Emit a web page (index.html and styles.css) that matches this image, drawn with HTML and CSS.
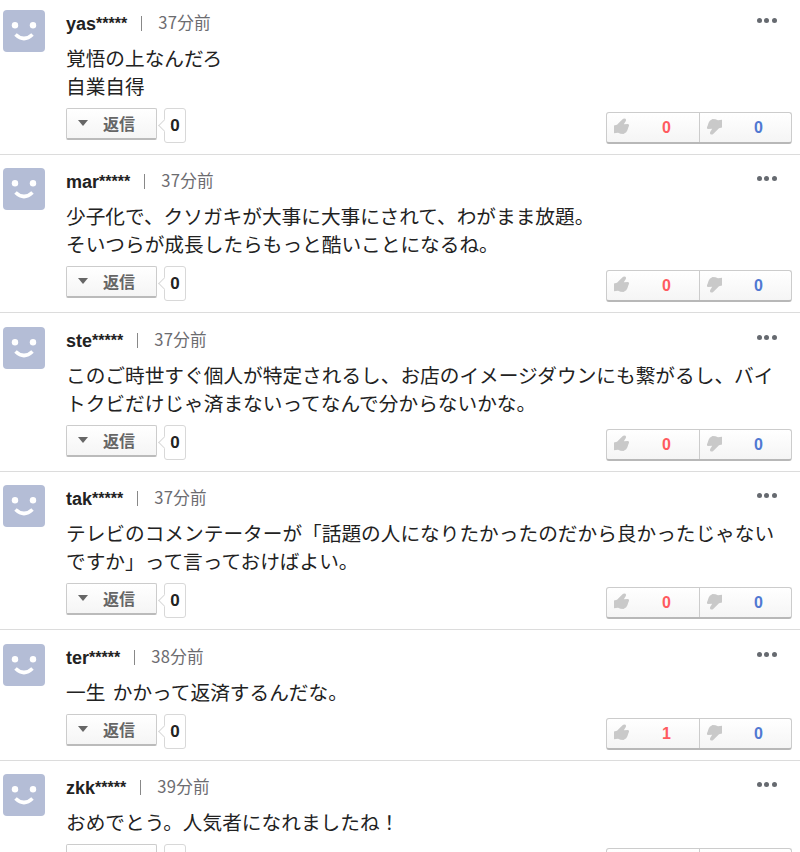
FILE: index.html
```html
<!DOCTYPE html>
<html lang="ja">
<head>
  <meta charset="UTF-8" />
  <meta name="viewport" content="width=device-width, initial-scale=1.0"/>
  <title>コメント</title>
  <link rel="stylesheet" href="styles.css">
</head>
<body>

  <!-- Shared icons -->
  <svg class="icons">
    <symbol id="face" viewBox="0 0 42 42">
      <circle cx="12" cy="15.2" r="3.2" fill="#fff"/>
      <circle cx="30" cy="15.2" r="3.2" fill="#fff"/>
      <path d="M12.5 24.5Q21 32.5 29.5 24.5" fill="none" stroke="#fff" stroke-width="3.6"/>
    </symbol>
    <symbol id="thumb" viewBox="0 0 16 17">
      <path d="M0 7.4L3 6.8L8.8 1Q10 .1 11.5.8Q12.5 1.6 11.8 2.9L9.8 6.3L14 5.9Q15.5 6.2 15 7.8L14.2 9.8L13.4 12.2L12.2 14.2L9.5 16L6.5 15.8L4 14.8L0 15.2Z" fill="#c9c9c9"/>
    </symbol>
  </svg>

  <ul id="comments"></ul>

  <script>
    const comments = [
      { name: 'yas', time: '37分前', lines: ['覚悟の上なんだろ', '自業自得'], good: 0 },
      { name: 'mar', time: '37分前', lines: ['少子化で、クソガキが大事に大事にされて、わがまま放題。', 'そいつらが成長したらもっと酷いことになるね。'], good: 0 },
      { name: 'ste', time: '37分前', lines: ['このご時世すぐ個人が特定されるし、お店のイメージダウンにも繋がるし、バイトクビだけじゃ済まないってなんで分からないかな。'], good: 0 },
      { name: 'tak', time: '37分前', lines: ['テレビのコメンテーターが「話題の人になりたかったのだから良かったじゃないですか」って言っておけばよい。'], good: 0 },
      { name: 'ter', time: '38分前', lines: ['一生 かかって返済するんだな。'], good: 1 },
      { name: 'zkk', time: '39分前', lines: ['おめでとう。人気者になれましたね！'], good: 0 }
    ];

    document.getElementById('comments').innerHTML = comments.map(c => `
      <li class="comment">
        <svg class="avatar"><use href="#face"/></svg>
        <div class="content">
          <div class="meta">
            <span class="name">${c.name}</span>
            <span class="stars">*****</span>
            <span class="divider"></span>
            <span class="time">${c.time}</span>
            <button class="more"><i></i><i></i><i></i></button>
          </div>
          <p class="text">${c.lines.join('<br>')}</p>
          <div class="actions">
            <button class="reply"><i class="arrow"></i>返信</button>
            <span class="count">0</span>
            <div class="votes">
              <button class="vote good"><svg><use href="#thumb"/></svg><b>${c.good}</b></button>
              <button class="vote bad"><svg><use href="#thumb"/></svg><b>0</b></button>
            </div>
          </div>
        </div>
      </li>`).join('');
  </script>

</body>
</html>
```
FILE: styles.css
```css
* {
  box-sizing: border-box;
  margin: 0;
  padding: 0;
}
body {
  font-family: "Liberation Sans", "Noto Sans CJK JP", sans-serif;
  background: #fff;
  color: #222;
  height: 852px;
  overflow: hidden;
}
.icons {
  display: none;
}
#comments {
  list-style: none;
}
.comment {
  display: flex;
  gap: 21px;
  padding: 13.4px 8px 11px 3px;
  border-bottom: 1px solid #dcdcdc;
}
.comment:first-child {
  padding-top: 10px;
}
.avatar {
  width: 42px;
  height: 42px;
  flex: none;
  background: #b4bdd6;
  border-radius: 4px;
}
.content {
  flex: 1;
}
.meta {
  display: flex;
  height: 35px;
  line-height: 25px;
}
.name {
  font-size: 18px;
  font-weight: bold;
  line-height: 29px;
}
.stars {
  font-size: 16px;
  font-weight: bold;
  line-height: 28px;
}
.divider {
  width: 1px;
  height: 15px;
  margin: 6px 16px 0 14px;
  background: #888;
}
.time {
  font-family: "Noto Sans CJK JP", sans-serif;
  font-size: 16.6px;
  line-height: 24px;
  letter-spacing: 0.3px;
  color: #6c6c70;
}
.more {
  display: flex;
  gap: 2.6px;
  height: 5px;
  margin: 8px 15px 0 auto;
  border: none;
  background: none;
}
.more i {
  width: 5px;
  height: 5px;
  border-radius: 50%;
  background: #666a70;
}
.text {
  font-family: "Noto Sans CJK JP", sans-serif;
  font-size: 19.68px;
  line-height: 28px;
  word-spacing: 3px;
  width: 714px;
  margin-top: -1px;
}
.actions {
  display: flex;
  height: 43px;
  padding-top: 8px;
}
.reply {
  display: flex;
  align-items: center;
  gap: 15px;
  width: 91px;
  height: 32px;
  padding: 0 0 1px 11px;
  border: 1px solid #ccc;
  border-bottom: 2px solid #bbb;
  border-radius: 2px;
  background: linear-gradient(#fff, #f5f5f5);
  font: bold 16px "Noto Sans CJK JP", sans-serif;
  color: #666;
}
.arrow {
  border: 5.5px solid transparent;
  border-top: 6px solid #666;
  border-bottom: 0;
}
.count {
  position: relative;
  width: 22px;
  height: 35px;
  margin-left: 7px;
  border: 1px solid #d8d8d8;
  border-radius: 3px;
  font-size: 17px;
  font-weight: bold;
  line-height: 34px;
  text-align: center;
}
.count::before {
  content: "";
  position: absolute;
  left: -5px;
  top: 12px;
  width: 8px;
  height: 8px;
  border: 1px solid #d8d8d8;
  border-width: 0 0 1px 1px;
  background: #fff;
  transform: rotate(45deg);
}
.votes {
  display: flex;
  width: 186px;
  height: 32px;
  margin: 4px 0 0 auto;
  border: 1px solid #ccc;
  border-bottom: 2px solid #b8b8b8;
  border-radius: 3px;
  background: linear-gradient(#fff, #f5f5f5);
}
.vote {
  display: flex;
  width: 92px;
  padding-left: 7px;
  border: none;
  background: none;
  font: bold 16px/29px "Liberation Sans", sans-serif;
}
.vote svg {
  width: 16px;
  height: 17px;
  margin: 5px 32px 0 0;
}
.vote.bad {
  padding-left: 6px;
  border-left: 1px solid #ccc;
}
.bad svg {
  transform: rotate(180deg);
}
.good b {
  color: #ff5a5f;
}
.bad b {
  color: #5078d2;
}
```
